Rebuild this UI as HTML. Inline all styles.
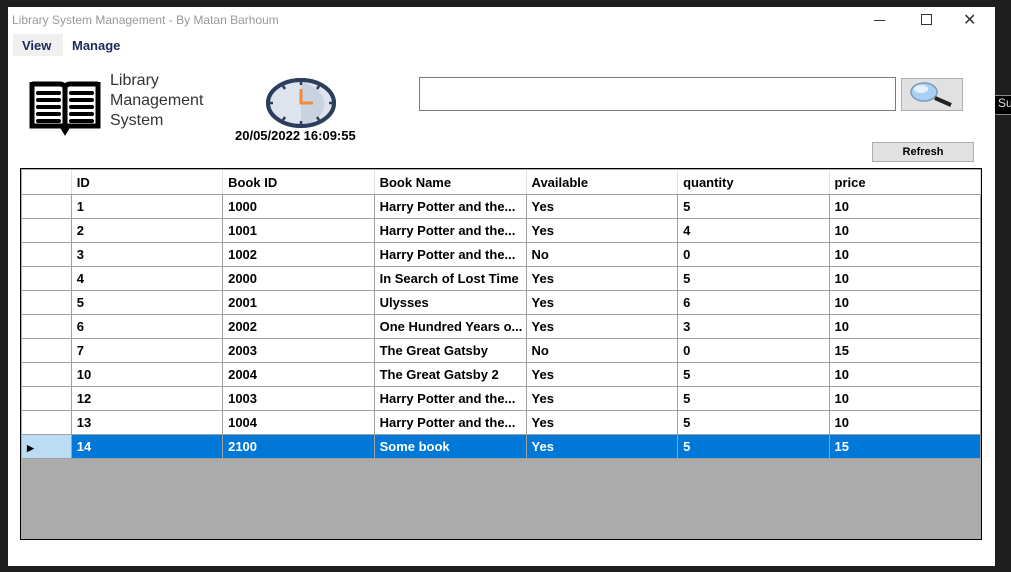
<!DOCTYPE html><html><head><style>
body{margin:0;width:1011px;height:572px;background:#1e1e1e;position:relative;overflow:hidden;font-family:"Liberation Sans",sans-serif}
.win{position:absolute;left:8px;top:7px;width:987px;height:559px;background:#fff}
.abs{position:absolute}
table{border-collapse:collapse;position:absolute;left:1px;top:1px}
td{height:23px;border:1px solid #a0a0a0;border-top:none;border-left:none;font-weight:bold;font-size:13px;padding:0 0 0 5px;color:#000;width:146px;white-space:nowrap}
td.rh{width:49px;padding:0}
tr.h td{height:24px;border-right:1px solid #e0e0e0;border-bottom:1px solid #a0a0a0}
tr.sel td{background:#0078d7;color:#fff}
tr.sel td.rh{background:#bcdcf4}
</style></head><body>
<div class="win">
<div class="abs" style="left:4px;top:6px;font-size:12px;color:#999">Library System Management - By Matan Barhoum</div>
<div class="abs" style="left:866px;top:13px;width:11px;height:1px;background:#333"></div>
<div class="abs" style="left:913px;top:7px;width:9px;height:9px;border:1px solid #333"></div>
<div class="abs" style="left:955px;top:3px;font-size:16px;color:#333">✕</div>
<div class="abs" style="left:5px;top:27px;width:50px;height:22px;background:#f0f0f0"></div>
<div class="abs" style="left:14px;top:31px;font-size:13px;font-weight:bold;color:#1a2a5a">View</div>
<div class="abs" style="left:64px;top:31px;font-size:13px;font-weight:bold;color:#1a2a5a">Manage</div>
<svg class="abs" style="left:21px;top:66px" width="72" height="64" viewBox="0 0 72 64">
<path d="M3 11h28c3 0 5 2 5 4v44M69 11H41c-3 0-5 2-5 4v44" fill="none" stroke="#000" stroke-width="5"/>
<path d="M3 9v44h30l3 5 3-5h30V9" fill="none" stroke="#000" stroke-width="5"/>
<g stroke="#000" stroke-width="4" stroke-linecap="round"><path d="M9 20h21M9 27h21M9 34h21M9 41h21M9 48h21M42 20h21M42 27h21M42 34h21M42 41h21M42 48h21"/></g></svg>
<div class="abs" style="left:102px;top:64px;font-size:16px;line-height:20px;color:#333">Library<br>Management<br>System</div>
<svg class="abs" style="left:257px;top:70px" width="72" height="52"><ellipse cx="36" cy="26" rx="33" ry="23" fill="#dde4ee" stroke="#2c3e5c" stroke-width="4"/><path d="M36 5a33 23 0 0 1 0 44z" fill="#c9d2e0"/><ellipse cx="36" cy="26" rx="33" ry="23" fill="none" stroke="#2c3e5c" stroke-width="4"/><path d="M36 12v14h12" fill="none" stroke="#f08a3c" stroke-width="3"/><g stroke="#2c3e5c" stroke-width="2.5"><path d="M36 4v4M36 44v4M4 26h4M64 26h4M18 9l2 3M54 9l-2 3M18 43l2-3M54 43l-2-3"/></g></svg>
<div class="abs" style="left:227px;top:121px;font-size:13px;font-weight:bold">20/05/2022 16:09:55</div>
<div class="abs" style="left:411px;top:70px;width:475px;height:32px;border:1px solid #7a7a7a"></div>
<div class="abs" style="left:893px;top:71px;width:60px;height:31px;border:1px solid #adadad;background:#e1e1e1"></div>
<svg class="abs" style="left:900px;top:74px" width="50" height="26"><ellipse cx="16" cy="11" rx="13" ry="9" fill="#a8d0f5" stroke="#7a9ab8" stroke-width="1.5"/><ellipse cx="13" cy="8" rx="7" ry="4" fill="#e4f1fd"/><path d="M27 17l16 7" stroke="#222" stroke-width="4"/></svg>
<div class="abs" style="left:864px;top:135px;width:100px;height:18px;border:1px solid #adadad;background:#e1e1e1;font-size:11px;font-weight:bold;text-align:center;line-height:18px">Refresh</div>
<div class="abs" style="left:12px;top:161px;width:960px;height:370px;border:1px solid #000;background:#ababab">
<table>
<tr class="h"><td class="rh" style="background:#fff"></td><td style="background:#fff">ID</td><td style="background:#fff">Book ID</td><td style="background:#fff">Book Name</td><td style="background:#fff">Available</td><td style="background:#fff">quantity</td><td style="background:#fff">price</td></tr>
<tr style="background:#fff"><td class="rh"></td><td>1</td><td>1000</td><td>Harry Potter and the...</td><td>Yes</td><td>5</td><td>10</td></tr>
<tr style="background:#fff"><td class="rh"></td><td>2</td><td>1001</td><td>Harry Potter and the...</td><td>Yes</td><td>4</td><td>10</td></tr>
<tr style="background:#fff"><td class="rh"></td><td>3</td><td>1002</td><td>Harry Potter and the...</td><td>No</td><td>0</td><td>10</td></tr>
<tr style="background:#fff"><td class="rh"></td><td>4</td><td>2000</td><td>In Search of Lost Time</td><td>Yes</td><td>5</td><td>10</td></tr>
<tr style="background:#fff"><td class="rh"></td><td>5</td><td>2001</td><td>Ulysses</td><td>Yes</td><td>6</td><td>10</td></tr>
<tr style="background:#fff"><td class="rh"></td><td>6</td><td>2002</td><td>One Hundred Years o...</td><td>Yes</td><td>3</td><td>10</td></tr>
<tr style="background:#fff"><td class="rh"></td><td>7</td><td>2003</td><td>The Great Gatsby</td><td>No</td><td>0</td><td>15</td></tr>
<tr style="background:#fff"><td class="rh"></td><td>10</td><td>2004</td><td>The Great Gatsby 2</td><td>Yes</td><td>5</td><td>10</td></tr>
<tr style="background:#fff"><td class="rh"></td><td>12</td><td>1003</td><td>Harry Potter and the...</td><td>Yes</td><td>5</td><td>10</td></tr>
<tr style="background:#fff"><td class="rh"></td><td>13</td><td>1004</td><td>Harry Potter and the...</td><td>Yes</td><td>5</td><td>10</td></tr>
<tr class="sel"><td class="rh"><span style="font-size:9px;color:#000;padding-left:5px">▶</span></td><td>14</td><td>2100</td><td>Some book</td><td>Yes</td><td>5</td><td>15</td></tr>
</table></div>
</div>
<div class="abs" style="left:995px;top:95px;width:16px;height:18px;background:#000;color:#ddd;font-size:12px;border-top:1px solid #888;border-bottom:1px solid #888;padding-left:3px">Su</div>
</body></html>
